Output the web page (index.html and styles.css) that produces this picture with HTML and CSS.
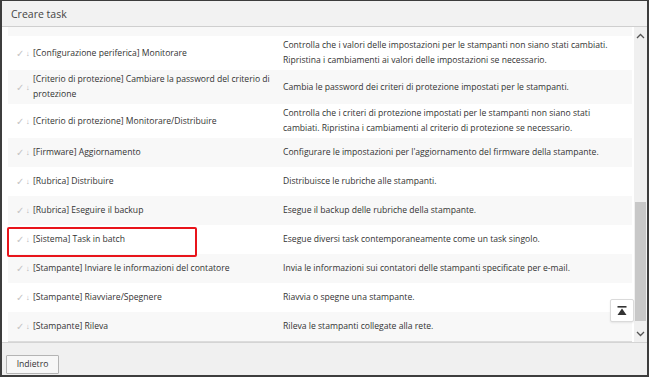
FILE: index.html
```html
<!DOCTYPE html>
<html lang="it">
<head>
  <meta charset="UTF-8" />
  <title>Creare task</title>
  <link rel="stylesheet" href="styles.css">
</head>
<body>
  <div class="dialog">
    <header class="dialog-head">Creare task</header>

    <div class="dialog-body">
      <div class="list-wrap">
        <div class="list-viewport" id="viewport">
          <div class="task-list">
            <div class="task-row">
              <span class="task-icons"><span class="ic-check">✓</span><span class="ic-arrow">↓</span></span>
              <span class="task-name">[Configurazione periferica] Distribuire le impostazioni</span>
              <span class="task-desc">Distribuisce le impostazioni di configurazione specificate alle stampanti.</span>
            </div>
            <div class="task-row">
              <span class="task-icons"><span class="ic-check">✓</span><span class="ic-arrow">↓</span></span>
              <span class="task-name">[Configurazione periferica] Monitorare</span>
              <span class="task-desc">Controlla che i valori delle impostazioni per le stampanti non siano stati cambiati. Ripristina i cambiamenti ai valori delle impostazioni se necessario.</span>
            </div>
            <div class="task-row">
              <span class="task-icons"><span class="ic-check">✓</span><span class="ic-arrow">↓</span></span>
              <span class="task-name">[Criterio di protezione] Cambiare la password del criterio di protezione</span>
              <span class="task-desc">Cambia le password dei criteri di protezione impostati per le stampanti.</span>
            </div>
            <div class="task-row">
              <span class="task-icons"><span class="ic-check">✓</span><span class="ic-arrow">↓</span></span>
              <span class="task-name">[Criterio di protezione] Monitorare/Distribuire</span>
              <span class="task-desc">Controlla che i criteri di protezione impostati per le stampanti non siano stati cambiati. Ripristina i cambiamenti al criterio di protezione se necessario.</span>
            </div>
            <div class="task-row">
              <span class="task-icons"><span class="ic-check">✓</span><span class="ic-arrow">↓</span></span>
              <span class="task-name">[Firmware] Aggiornamento</span>
              <span class="task-desc">Configurare le impostazioni per l'aggiornamento del firmware della stampante.</span>
            </div>
            <div class="task-row">
              <span class="task-icons"><span class="ic-check">✓</span><span class="ic-arrow">↓</span></span>
              <span class="task-name">[Rubrica] Distribuire</span>
              <span class="task-desc">Distribuisce le rubriche alle stampanti.</span>
            </div>
            <div class="task-row">
              <span class="task-icons"><span class="ic-check">✓</span><span class="ic-arrow">↓</span></span>
              <span class="task-name">[Rubrica] Eseguire il backup</span>
              <span class="task-desc">Esegue il backup delle rubriche della stampante.</span>
            </div>
            <div class="task-row is-marked">
              <span class="task-icons"><span class="ic-check">✓</span><span class="ic-arrow">↓</span></span>
              <span class="task-name">[Sistema] Task in batch</span>
              <span class="task-desc">Esegue diversi task contemporaneamente come un task singolo.</span>
            </div>
            <div class="task-row">
              <span class="task-icons"><span class="ic-check">✓</span><span class="ic-arrow">↓</span></span>
              <span class="task-name">[Stampante] Inviare le informazioni del contatore</span>
              <span class="task-desc">Invia le informazioni sui contatori delle stampanti specificate per e-mail.</span>
            </div>
            <div class="task-row">
              <span class="task-icons"><span class="ic-check">✓</span><span class="ic-arrow">↓</span></span>
              <span class="task-name">[Stampante] Riavviare/Spegnere</span>
              <span class="task-desc">Riavvia o spegne una stampante.</span>
            </div>
            <div class="task-row">
              <span class="task-icons"><span class="ic-check">✓</span><span class="ic-arrow">↓</span></span>
              <span class="task-name">[Stampante] Rileva</span>
              <span class="task-desc">Rileva le stampanti collegate alla rete.</span>
            </div>
          </div>
        </div>

        <button class="to-top" type="button" title="Torna su">
          <svg width="10" height="9" viewBox="0 0 10 9">
            <rect x="0.5" y="0" width="9" height="1.6" fill="#333" />
            <path d="M5 2.6 L9.5 9 L0.5 9 Z" fill="#333" />
          </svg>
        </button>
      </div>

      <div class="scrollbar">
        <span class="sb-arrow">
          <svg width="9" height="6" viewBox="0 0 9 6"><path d="M1 5 L4.5 1.5 L8 5" fill="none" stroke="#555" stroke-width="1.3" /></svg>
        </span>
        <div class="sb-track"><div class="sb-thumb"></div></div>
        <span class="sb-arrow">
          <svg width="9" height="6" viewBox="0 0 9 6"><path d="M1 1 L4.5 4.5 L8 1" fill="none" stroke="#555" stroke-width="1.3" /></svg>
        </span>
      </div>
    </div>

    <footer class="dialog-foot">
      <button class="btn" type="button">Indietro</button>
    </footer>
  </div>

  <script>
    // list is shown scrolled down to its end
    const viewport = document.getElementById('viewport');
    viewport.scrollTop = viewport.scrollHeight - viewport.clientHeight;
  </script>
</body>
</html>
```

FILE: styles.css
```css
* { margin: 0; padding: 0; box-sizing: border-box; }
body {
  font-family: 'Open Sans', 'Noto Sans', sans-serif;
  color: #333;
  background: #fff;
}
.dialog {
  width: 649px; height: 377px;
  display: flex; flex-direction: column;
  border: 2px solid #3d3d3d; border-top-width: 1px;
  background: #fff;
}
.dialog-head {
  height: 26px; flex: none;
  padding-left: 9px;
  display: flex; align-items: center;
  font-size: 10.5px; color: #444;
  background: #f2f2f2; border-bottom: 1px solid #cfcfcf;
}
.dialog-body { flex: 1; display: flex; min-height: 0; }
.list-wrap { flex: 1; position: relative; min-width: 0; }
.list-viewport {
  height: 100%; overflow: hidden;
  padding: 0 2px 0 6px;
}
.task-list { border-bottom: 1px solid #dcdcdc; }
.task-row {
  display: grid; grid-template-columns: 25px 250px 1fr;
  align-items: center;
  min-height: 29px; padding: 2px 0;
  font-size: 8.6px; line-height: 15px;
}
.task-row:nth-child(odd) { background: #f8f8f8; }
.task-icons { display: flex; align-items: center; gap: 2px; padding-left: 8px; color: #c4c4c4; }
.ic-check { font-size: 9.5px; }
.ic-arrow { font-size: 7.5px; color: #b0b0b0; }
.task-name { padding-right: 4px; }
.task-desc { padding-right: 18px; }
.is-marked { position: relative; }
.is-marked::after {
  content: ''; position: absolute;
  left: -1px; top: 2px; width: 186px; height: 26px;
  border: 2px solid #e8141b; border-radius: 2px;
}
.to-top {
  position: absolute; right: 0; bottom: 20px;
  width: 24px; height: 23px;
  display: flex; align-items: center; justify-content: center;
  background: #fff; border: 1px solid #dadada; border-radius: 2px;
  box-shadow: 0 1px 2px rgba(0,0,0,0.08);
}
.scrollbar {
  width: 13px; flex: none;
  display: flex; flex-direction: column;
  background: #f0f0f0;
}
.sb-arrow { height: 17px; display: flex; align-items: center; justify-content: center; }
.sb-track { flex: 1; display: flex; flex-direction: column; justify-content: flex-end; padding: 0 1px; }
.sb-thumb { height: 119px; margin-bottom: 4px; background: #c8c8c8; }
.dialog-foot {
  height: 33px; flex: none;
  display: flex; align-items: center; padding: 0 4px;
  background: #f0f0f0; border-top: 1px solid #d4d4d4;
}
.btn {
  width: 53px; height: 19px;
  font-family: inherit; font-size: 8.6px; color: #333;
  background: #f7f7f7; border: 1px solid #b4b4b4; border-radius: 1px;
  margin-top: 10px;
}
```
